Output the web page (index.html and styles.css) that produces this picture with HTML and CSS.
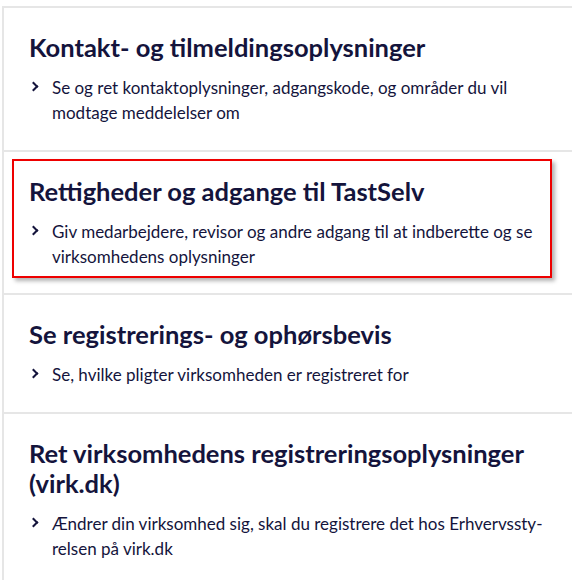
FILE: index.html
```html
<!DOCTYPE html>
<html lang="da">
<head>
    <meta charset="UTF-8">
    <meta name="viewport" content="width=device-width, initial-scale=1.0">
    <title>Virksomhed</title>
    <link rel="stylesheet" href="styles.css">
</head>
<body>
    <div class="liste">
        <div class="punkt">
            <h2>Kontakt- og tilmeldingsoplysninger</h2>
            <p class="link">Se og ret kontaktoplysninger, adgangskode, og områder du vil modtage meddelelser om</p>
        </div>

        <div class="punkt markeret">
            <h2>Rettigheder og adgange til TastSelv</h2>
            <p class="link">Giv medarbejdere, revisor og andre adgang til at indberette og se virksomhedens oplysninger</p>
            <div class="ramme"></div>
        </div>

        <div class="punkt">
            <h2>Se registrerings- og ophørsbevis</h2>
            <p class="link">Se, hvilke pligter virksomheden er registreret for</p>
        </div>

        <div class="punkt">
            <h2>Ret virksomhedens registreringsoplysninger (virk.dk)</h2>
            <p class="link">Ændrer din virksomhed sig, skal du registrere det hos Erhvervssty&shy;relsen på virk.dk</p>
        </div>
    </div>
</body>
</html>
```

FILE: styles.css
```css
body {
    margin: 0;
    padding: 6px 0 0 2px;
    font-family: Lato, "Noto Sans", sans-serif;
    color: #14143c;
    background: #fff;
}
.liste {
    border-left: 2px solid #e6e6e6;
}
.punkt {
    position: relative;
    border-top: 2px solid #e6e6e6;
    padding: 24px 24px 24.5px 25px;
}
h2 {
    margin: 0 0 13px;
    font-size: 25.5px;
    line-height: 30px;
    font-weight: bold;
}
.link {
    position: relative;
    margin: 0;
    padding-left: 23px;
    font-size: 17px;
    line-height: 25px;
    hyphens: manual;
}
.link::before {
    content: "";
    position: absolute;
    left: 1px;
    top: 8px;
    width: 5px;
    height: 5px;
    border-top: 2.5px solid #14143c;
    border-right: 2.5px solid #14143c;
    transform: rotate(45deg);
}
.ramme {
    position: absolute;
    left: 8px;
    right: 20px;
    top: 7px;
    bottom: 15px;
    border: 2px solid #ee0000;
    box-shadow: 3px 3px 4px rgba(0, 0, 0, 0.3);
}
```
